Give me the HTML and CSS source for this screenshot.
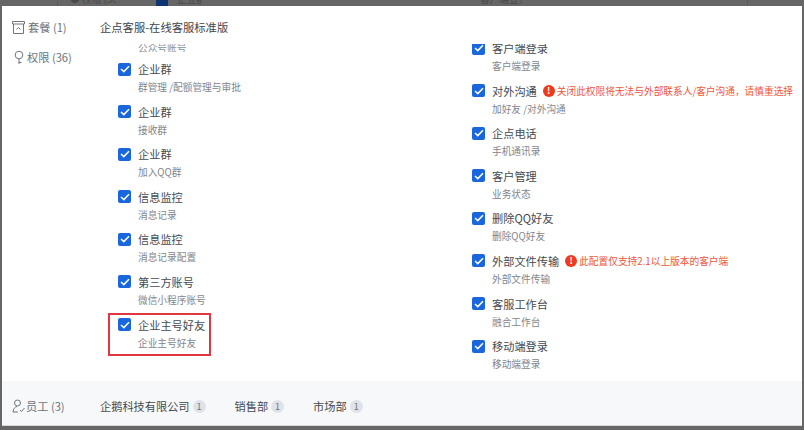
FILE: index.html
```html
<!DOCTYPE html>
<html lang="zh-CN">
<head>
    <meta charset="UTF-8">
    <title>权限配置</title>
    <link rel="stylesheet" href="styles.css">
</head>
<body>
    <div class="backdrop">
        <span class="peek-line peek-line-left"></span>
        <span class="peek-text peek-left">● 权限 (36)</span>
        <span class="peek-box"></span>
        <span class="peek-text peek-mid">企业群</span>
        <span class="peek-text peek-right">客户端登录</span>
        <span class="peek-line peek-line-right"></span>
    </div>

    <div class="modal">
        <div class="modal-body">
            <aside class="side-nav">
                <div class="side-item">
                    <svg width="13" height="13" viewBox="0 0 13 13" fill="none" stroke="#6f757d" stroke-width="1">
                        <path d="M.5 .5h12v2.500H.5zM1.500 3v9.500h10V3"/>
                        <path d="M4.500 8.500L6.500 6.500l2 2"/>
                    </svg>
                    <span>套餐 (1)</span>
                </div>
                <div class="side-item side-item-key">
                    <svg width="10" height="15" viewBox="0 0 10 15" fill="none" stroke="#6f757d" stroke-width="1">
                        <circle cx="5" cy="5" r="3.800"/>
                        <path d="M5 9v5M5 12.500h2.500"/>
                    </svg>
                    <span>权限 (36)</span>
                </div>
            </aside>

            <section class="perm-panel">
                <h2 class="perm-title">企点客服-在线客服标准版</h2>
                <div class="perm-columns">
                    <div class="perm-col perm-col-left">
                        <div class="cut-text">公众号账号</div>
                        <div class="perm-item">
                            <label class="perm-head"><span class="check"><svg width="10" height="8" viewBox="0 0 10 8"><path d="M1 4l2.800 2.600L9 1.200" fill="none" stroke="#fff" stroke-width="1.500"/></svg></span><span class="perm-name">企业群</span></label>
                            <p class="perm-desc">群管理 /配额管理与审批</p>
                        </div>
                        <div class="perm-item">
                            <label class="perm-head"><span class="check"><svg width="10" height="8" viewBox="0 0 10 8"><path d="M1 4l2.800 2.600L9 1.200" fill="none" stroke="#fff" stroke-width="1.500"/></svg></span><span class="perm-name">企业群</span></label>
                            <p class="perm-desc">接收群</p>
                        </div>
                        <div class="perm-item">
                            <label class="perm-head"><span class="check"><svg width="10" height="8" viewBox="0 0 10 8"><path d="M1 4l2.800 2.600L9 1.200" fill="none" stroke="#fff" stroke-width="1.500"/></svg></span><span class="perm-name">企业群</span></label>
                            <p class="perm-desc">加入QQ群</p>
                        </div>
                        <div class="perm-item">
                            <label class="perm-head"><span class="check"><svg width="10" height="8" viewBox="0 0 10 8"><path d="M1 4l2.800 2.600L9 1.200" fill="none" stroke="#fff" stroke-width="1.500"/></svg></span><span class="perm-name">信息监控</span></label>
                            <p class="perm-desc">消息记录</p>
                        </div>
                        <div class="perm-item">
                            <label class="perm-head"><span class="check"><svg width="10" height="8" viewBox="0 0 10 8"><path d="M1 4l2.800 2.600L9 1.200" fill="none" stroke="#fff" stroke-width="1.500"/></svg></span><span class="perm-name">信息监控</span></label>
                            <p class="perm-desc">消息记录配置</p>
                        </div>
                        <div class="perm-item">
                            <label class="perm-head"><span class="check"><svg width="10" height="8" viewBox="0 0 10 8"><path d="M1 4l2.800 2.600L9 1.200" fill="none" stroke="#fff" stroke-width="1.500"/></svg></span><span class="perm-name">第三方账号</span></label>
                            <p class="perm-desc">微信小程序账号</p>
                        </div>
                        <div class="perm-item perm-item-marked">
                            <label class="perm-head"><span class="check"><svg width="10" height="8" viewBox="0 0 10 8"><path d="M1 4l2.800 2.600L9 1.200" fill="none" stroke="#fff" stroke-width="1.500"/></svg></span><span class="perm-name">企业主号好友</span></label>
                            <p class="perm-desc">企业主号好友</p>
                        </div>
                    </div>

                    <div class="perm-col perm-col-right">
                        <div class="perm-item perm-item-first">
                            <label class="perm-head"><span class="check"><svg width="10" height="8" viewBox="0 0 10 8"><path d="M1 4l2.800 2.600L9 1.200" fill="none" stroke="#fff" stroke-width="1.500"/></svg></span><span class="perm-name">客户端登录</span></label>
                            <p class="perm-desc">客户端登录</p>
                        </div>
                        <div class="perm-item">
                            <label class="perm-head"><span class="check"><svg width="10" height="8" viewBox="0 0 10 8"><path d="M1 4l2.800 2.600L9 1.200" fill="none" stroke="#fff" stroke-width="1.500"/></svg></span><span class="perm-name">对外沟通</span><span class="warn-dot">!</span><span class="warn-text">关闭此权限将无法与外部联系人/客户沟通，请慎重选择</span></label>
                            <p class="perm-desc">加好友 /对外沟通</p>
                        </div>
                        <div class="perm-item">
                            <label class="perm-head"><span class="check"><svg width="10" height="8" viewBox="0 0 10 8"><path d="M1 4l2.800 2.600L9 1.200" fill="none" stroke="#fff" stroke-width="1.500"/></svg></span><span class="perm-name">企点电话</span></label>
                            <p class="perm-desc">手机通讯录</p>
                        </div>
                        <div class="perm-item">
                            <label class="perm-head"><span class="check"><svg width="10" height="8" viewBox="0 0 10 8"><path d="M1 4l2.800 2.600L9 1.200" fill="none" stroke="#fff" stroke-width="1.500"/></svg></span><span class="perm-name">客户管理</span></label>
                            <p class="perm-desc">业务状态</p>
                        </div>
                        <div class="perm-item">
                            <label class="perm-head"><span class="check"><svg width="10" height="8" viewBox="0 0 10 8"><path d="M1 4l2.800 2.600L9 1.200" fill="none" stroke="#fff" stroke-width="1.500"/></svg></span><span class="perm-name">删除QQ好友</span></label>
                            <p class="perm-desc">删除QQ好友</p>
                        </div>
                        <div class="perm-item">
                            <label class="perm-head"><span class="check"><svg width="10" height="8" viewBox="0 0 10 8"><path d="M1 4l2.800 2.600L9 1.200" fill="none" stroke="#fff" stroke-width="1.500"/></svg></span><span class="perm-name">外部文件传输</span><span class="warn-dot">!</span><span class="warn-text">此配置仅支持2.1以上版本的客户端</span></label>
                            <p class="perm-desc">外部文件传输</p>
                        </div>
                        <div class="perm-item">
                            <label class="perm-head"><span class="check"><svg width="10" height="8" viewBox="0 0 10 8"><path d="M1 4l2.800 2.600L9 1.200" fill="none" stroke="#fff" stroke-width="1.500"/></svg></span><span class="perm-name">客服工作台</span></label>
                            <p class="perm-desc">融合工作台</p>
                        </div>
                        <div class="perm-item">
                            <label class="perm-head"><span class="check"><svg width="10" height="8" viewBox="0 0 10 8"><path d="M1 4l2.800 2.600L9 1.200" fill="none" stroke="#fff" stroke-width="1.500"/></svg></span><span class="perm-name">移动端登录</span></label>
                            <p class="perm-desc">移动端登录</p>
                        </div>
                    </div>
                </div>
            </section>
        </div>

        <footer class="staff-bar">
            <div class="staff-label">
                <svg width="13" height="14" viewBox="0 0 13 14" fill="none" stroke="#6f757d" stroke-width="1">
                    <circle cx="5.500" cy="4" r="3"/>
                    <path d="M5 7.500C3 8 1 10 1 13h5M8 11l1.500 1.500L12.500 9"/>
                </svg>
                <span>员工 (3)</span>
            </div>
            <div class="dept"><span>企鹅科技有限公司</span><span class="dept-count">1</span></div>
            <div class="dept"><span>销售部</span><span class="dept-count">1</span></div>
            <div class="dept"><span>市场部</span><span class="dept-count">1</span></div>
        </footer>
    </div>
</body>
</html>
```

FILE: styles.css
```css
* {
    margin: 0;
    padding: 0;
    box-sizing: border-box;
}

html,
body {
    width: 804px;
    height: 430px;
    overflow: hidden;
}

body {
    font-family: 'Noto Sans CJK SC', 'Liberation Sans', sans-serif;
    background-color: #666;
    color: #444a52;
    display: flex;
    flex-direction: column;
    padding: 0 2px 4px;
}

.backdrop {
    height: 6px;
    overflow: hidden;
    flex-shrink: 0;
    display: flex;
    align-items: flex-end;
    margin: 0 -2px;
}

.peek-line {
    width: 1px;
    height: 6px;
    background-color: #5a5a5a;
    flex-shrink: 0;
}

.peek-line-left {
    margin-left: 57px;
}

.peek-line-right {
    margin-left: auto;
    margin-right: 56px;
}

.peek-text {
    font-size: 9.700px;
    line-height: 14px;
    height: 6px;
    overflow: hidden;
    color: #4a4a4a;
    white-space: nowrap;
    display: flex;
    align-items: flex-end;
    flex-shrink: 0;
}

.peek-left {
    margin-left: 12px;
    width: 46px;
}

.peek-box {
    width: 12px;
    height: 6px;
    background-color: #0f3570;
    margin-left: 40px;
    flex-shrink: 0;
}

.peek-mid {
    margin-left: 9px;
    width: 25px;
}

.peek-right {
    margin-left: 278px;
    width: 42px;
}

.modal {
    flex: 1;
    background-color: #fff;
    border-bottom: 1px solid #d8d8d8;
    display: flex;
    flex-direction: column;
    min-height: 0;
}

.modal-body {
    flex: 1;
    display: flex;
    min-height: 0;
    overflow: hidden;
}

.side-nav {
    width: 98px;
    padding: 12px 0 0 10px;
    flex-shrink: 0;
    color: #6d737b;
    font-size: 11.200px;
}

.side-item {
    display: flex;
    align-items: center;
    gap: 3px;
    height: 18px;
    margin-bottom: 12px;
}

.side-item-key {
    padding-left: 2px;
}

.perm-panel {
    flex: 1;
    display: flex;
    flex-direction: column;
    min-width: 0;
}

.perm-title {
    font-size: 11.300px;
    font-weight: 400;
    color: #3f444b;
    line-height: 18px;
    padding-top: 12px;
    height: 38px;
    flex-shrink: 0;
}

.perm-columns {
    display: flex;
    flex: 1;
    min-height: 0;
    overflow: hidden;
}

.perm-col-left {
    width: 372px;
    padding-left: 18px;
    flex-shrink: 0;
}

.perm-col-right {
    flex: 1;
    min-width: 0;
}

.cut-text {
    font-size: 9.700px;
    line-height: 8px;
    height: 8px;
    overflow: hidden;
    color: #8a9098;
    padding-left: 20px;
    margin-bottom: 8px;
}

.perm-item {
    height: 42.600px;
}

.perm-item-first {
    margin-top: -5px;
}

.perm-item-marked {
    position: relative;
}

.perm-item-marked::after {
    content: "";
    box-sizing: border-box;
    position: absolute;
    left: -10px;
    top: -3px;
    width: 103px;
    height: 43px;
    border: 2px solid #e0383e;
    pointer-events: none;
}

.perm-head {
    display: flex;
    align-items: center;
    height: 18px;
}

.check {
    width: 13px;
    height: 13px;
    border-radius: 2px;
    background-color: #1a66dc;
    display: flex;
    align-items: center;
    justify-content: center;
    margin-right: 7px;
    flex-shrink: 0;
}

.perm-name {
    font-size: 11.200px;
    color: #444a52;
    line-height: 18px;
    white-space: nowrap;
}

.perm-desc {
    font-size: 9.700px;
    color: #7f858d;
    line-height: 19px;
    padding-left: 20px;
}

.warn-dot {
    width: 12px;
    height: 12px;
    border-radius: 50%;
    background-color: #ef3b1d;
    color: #fff;
    font-size: 9px;
    font-weight: 700;
    line-height: 12px;
    text-align: center;
    margin-left: 6px;
    margin-right: 2px;
    flex-shrink: 0;
}

.warn-text {
    font-size: 9.700px;
    color: #f0553c;
    white-space: nowrap;
}

.staff-bar {
    height: 44px;
    flex-shrink: 0;
    background-color: #f7f8fa;
    display: flex;
    align-items: center;
    padding: 6px 0 0 10px;
    font-size: 11.200px;
    color: #444a52;
}

.staff-label {
    width: 88px;
    display: flex;
    align-items: center;
    gap: 1px;
    color: #6d737b;
}

.dept {
    display: flex;
    align-items: center;
    gap: 3px;
    margin-right: 29px;
}

.dept-count {
    width: 13px;
    height: 13px;
    border-radius: 50%;
    background-color: #dfe2e8;
    color: #6d737b;
    font-size: 9px;
    line-height: 13px;
    text-align: center;
}
```
